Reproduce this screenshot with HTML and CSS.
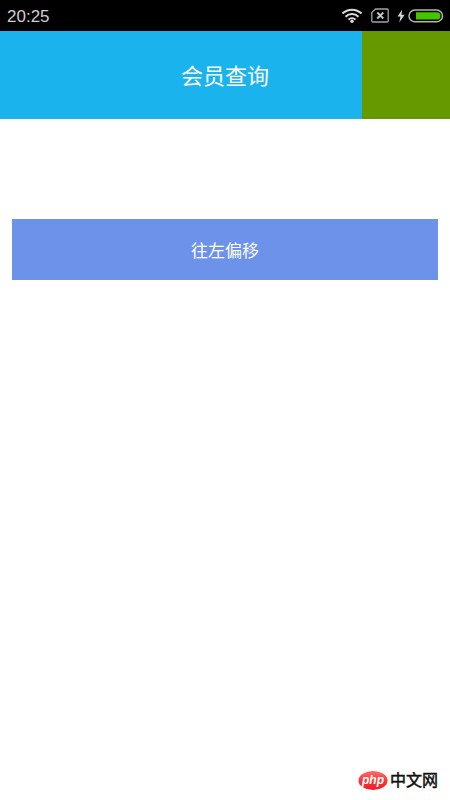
FILE: index.html
```html
<!DOCTYPE html>
<html lang="zh-CN">
<head>
<meta charset="utf-8">
<meta name="viewport" content="width=device-width, initial-scale=1">
<title>会员查询</title>
<link rel="stylesheet" href="styles.css">
</head>
<body>
<div class="status-bar">
  <time class="clock">20:25</time>
  <div class="status-icons">
    <svg class="wifi" width="22" height="16" viewBox="0 0 22 16" aria-hidden="true">
      <g fill="none" stroke="#dcdcdc" stroke-width="2">
        <path d="M1.500 5.600C7 .5 15 .5 20.500 5.600"/>
        <path d="M4.500 8.700C8.300 5.200 13.700 5.200 17.500 8.700"/>
        <path d="M7.500 11.600C9.500 9.700 12.500 9.700 14.500 11.600"/>
      </g>
      <circle cx="11" cy="13.300" r="1.700" fill="#dcdcdc"/>
    </svg>
    <svg class="sim" width="18" height="15" viewBox="0 0 18 15" aria-hidden="true">
      <path d="M4.500 1H16.200Q17.200 1 17.200 2V13Q17.200 14 16.200 14H1.800Q.8 14 .8 13V4.600Z" fill="none" stroke="#a2a2a2" stroke-width="1.300"/>
      <path d="M6.300 4.500l6 6M12.300 4.500l-6 6" stroke="#c4c4c4" stroke-width="1.900"/>
    </svg>
    <svg class="bolt" width="8" height="14" viewBox="0 0 8 14" aria-hidden="true">
      <path d="M5.200.5L.6 7.600H3.500L2.300 13.500L7.600 5.700H4.500Z" fill="#d8d8d8"/>
    </svg>
    <svg class="battery" width="36" height="14" viewBox="0 0 36 14" aria-hidden="true">
      <rect x="1" y="1" width="33.500" height="11.800" rx="5.900" fill="none" stroke="#b4b4b4" stroke-width="1.500"/>
      <path d="M8 3.200H28.800A3.700 3.700 0 0 1 28.800 10.600H8Z" fill="#43c600"/>
    </svg>
  </div>
</div>
<header class="title-bar">
  <h1 class="title">会员查询</h1>
  <div class="title-action"></div>
</header>
<main class="content">
  <button class="shift-button" type="button">往左偏移</button>
</main>
<footer class="footer">
  <svg class="brand" width="82" height="22" viewBox="0 0 82 22" role="img" aria-label="php中文网">
    <defs>
      <linearGradient id="red" x1="0" y1="0" x2="0" y2="1">
        <stop offset="0" stop-color="#ff6b64"/>
        <stop offset=".5" stop-color="#f8383a"/>
        <stop offset="1" stop-color="#ee1c24"/>
      </linearGradient>
    </defs>
    <ellipse cx="15" cy="10.500" rx="14.500" ry="9.500" fill="url(#red)"/>
    <text class="brand-php" x="15" y="14" text-anchor="middle">php</text>
    <text class="brand-name" x="32" y="16">中文网</text>
  </svg>
</footer>
</body>
</html>
```
FILE: styles.css
```css
* {
  box-sizing: border-box;
}

body {
  display: flex;
  flex-direction: column;
  min-height: 100vh;
  margin: 0;
  background: #fff;
  color: #fff;
  font-family: "Liberation Sans", "Noto Sans CJK SC", sans-serif;
}

.status-bar {
  display: flex;
  align-items: center;
  justify-content: space-between;
  height: 31px;
  padding: 0 6px 0 7px;
  background: #000;
}

.clock {
  padding-top: 2px;
  color: #cfcfcf;
  font-size: 17px;
  line-height: 20px;
}

.status-icons {
  display: flex;
  align-items: center;
}

.sim {
  margin: 0 8px;
}

.bolt {
  margin-right: 3px;
}

.title-bar {
  display: grid;
  grid-template-columns: 88px 1fr 88px;
  height: 88px;
  background: #1bb3ee;
}

.title {
  grid-column: 2;
  align-self: center;
  margin: 0;
  padding-top: 4px;
  font-size: 22px;
  font-weight: 400;
  line-height: 32px;
  text-align: center;
}

.title-action {
  background: #669900;
}

.content {
  flex: 1;
  padding: 100px 12px 0;
}

.shift-button {
  display: block;
  width: 100%;
  height: 61px;
  padding: 0;
  border: 0;
  background: #6d92ea;
  color: #fff;
  font: inherit;
  font-size: 17px;
}

.footer {
  display: flex;
  justify-content: flex-end;
  padding: 0 10px 8px;
}

.brand-php {
  fill: #fff;
  font-size: 12px;
  font-style: italic;
  font-weight: 700;
}

.brand-name {
  fill: #111;
  stroke: #111;
  stroke-width: 0.5px;
  font-size: 16px;
  font-weight: 400;
}
```
